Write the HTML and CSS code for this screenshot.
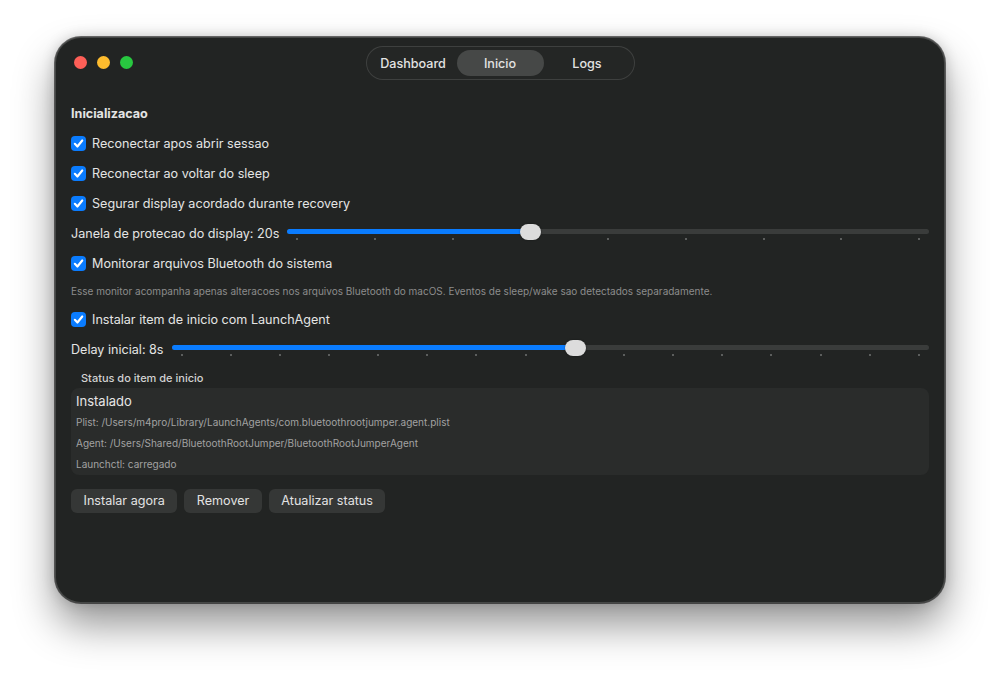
FILE: index.html
```html
<!DOCTYPE html>
<html>
<head>
    <title>BluetoothRootJumper - Inicio</title>
    <link rel="stylesheet" href="styles.css">
</head>
<body>
    <div class="window">
        <div class="titlebar">
            <div class="lights">
                <span class="light light--red"></span>
                <span class="light light--yellow"></span>
                <span class="light light--green"></span>
            </div>
            <div class="segmented">
                <span class="segmented__item">Dashboard</span>
                <span class="segmented__item segmented__item--active">Inicio</span>
                <span class="segmented__item">Logs</span>
            </div>
            <div></div>
        </div><!-- end titlebar -->

        <div class="content">
            <div class="row heading">Inicializacao</div>

            <label class="row check">
                <span class="check__box"><svg viewBox="0 0 14 14"><path d="M3.6 7.3 L6 9.8 L10.5 4.2" /></svg></span>
                Reconectar apos abrir sessao
            </label>
            <label class="row check">
                <span class="check__box"><svg viewBox="0 0 14 14"><path d="M3.6 7.3 L6 9.8 L10.5 4.2" /></svg></span>
                Reconectar ao voltar do sleep
            </label>
            <label class="row check">
                <span class="check__box"><svg viewBox="0 0 14 14"><path d="M3.6 7.3 L6 9.8 L10.5 4.2" /></svg></span>
                Segurar display acordado durante recovery
            </label>

            <div class="row slider">
                <span class="slider__label">Janela de protecao do display: 20s</span>
                <div class="slider__track">
                    <div class="slider__bar">
                        <div class="slider__fill" style="width: calc(10px + (100% - 20px) * 0.375)"></div>
                        <div class="slider__knob" style="left: calc(10px + (100% - 20px) * 0.375)"></div>
                    </div>
                    <div class="slider__ticks">
                        <i></i><i></i><i></i><i></i><i></i><i></i><i></i><i></i><i></i>
                    </div>
                </div>
            </div>

            <label class="row check">
                <span class="check__box"><svg viewBox="0 0 14 14"><path d="M3.6 7.3 L6 9.8 L10.5 4.2" /></svg></span>
                Monitorar arquivos Bluetooth do sistema
            </label>
            <div class="row caption">Esse monitor acompanha apenas alteracoes nos arquivos Bluetooth do macOS. Eventos de sleep/wake sao detectados separadamente.</div>

            <label class="row check">
                <span class="check__box"><svg viewBox="0 0 14 14"><path d="M3.6 7.3 L6 9.8 L10.5 4.2" /></svg></span>
                Instalar item de inicio com LaunchAgent
            </label>

            <div class="row slider">
                <span class="slider__label">Delay inicial: 8s</span>
                <div class="slider__track">
                    <div class="slider__bar">
                        <div class="slider__fill" style="width: calc(10px + (100% - 20px) * 0.5333)"></div>
                        <div class="slider__knob" style="left: calc(10px + (100% - 20px) * 0.5333)"></div>
                    </div>
                    <div class="slider__ticks">
                        <i></i><i></i><i></i><i></i><i></i><i></i><i></i><i></i>
                        <i></i><i></i><i></i><i></i><i></i><i></i><i></i><i></i>
                    </div>
                </div>
            </div>

            <div class="status__label">Status do item de inicio</div>
            <div class="status">
                <div class="status__title">Instalado</div>
                <div class="status__line">Plist: /Users/m4pro/Library/LaunchAgents/com.bluetoothrootjumper.agent.plist</div>
                <div class="status__line">Agent: /Users/Shared/BluetoothRootJumper/BluetoothRootJumperAgent</div>
                <div class="status__line">Launchctl: carregado</div>
            </div>

            <div class="buttons">
                <a href="#" class="btn">Instalar agora</a>
                <a href="#" class="btn">Remover</a>
                <a href="#" class="btn">Atualizar status</a>
            </div>
        </div><!-- end content -->
    </div><!-- end window -->
</body>
</html>
```

FILE: styles.css
```css
html, body {
    margin: 0;
    background: #fff;
    font-family: Inter, 'Noto Sans', sans-serif;
}

body {
    padding: 37px 0 0 55px;
    min-height: 100vh;
    box-sizing: border-box;
}

.window {
    width: 890px;
    height: 566px;
    box-sizing: border-box;
    background: #222423;
    border-radius: 26px;
    box-shadow: inset 0 0 0 1px rgba(255,255,255,0.16),
                0 0 0 1px rgba(0,0,0,0.55),
                0 22px 40px rgba(0,0,0,0.42),
                0 0 14px rgba(0,0,0,0.18);
    color: #e6e6e6;
}

.titlebar {
    display: grid;
    grid-template-columns: 1fr auto 1fr;
    align-items: start;
    height: 52px;
    padding-top: 9px;
    box-sizing: border-box;
}

.lights {
    display: flex;
    gap: 10px;
    padding: 10px 0 0 19px;
}

.light {
    width: 13px;
    height: 13px;
    border-radius: 50%;
}

.light--red { background: #fe5f57; }
.light--yellow { background: #febc2e; }
.light--green { background: #28c840; }

.segmented {
    display: flex;
    padding: 3px;
    width: 269px;
    height: 34px;
    box-sizing: border-box;
    border-radius: 17px;
    border: 1px solid rgba(255,255,255,0.12);
    background: #242625;
}

.segmented__item {
    flex: 1;
    display: flex;
    align-items: center;
    justify-content: center;
    font-size: 12.6px;
    font-weight: 500;
    color: #e2e2e2;
    border-radius: 13px;
}

.segmented__item--active {
    background: #464847;
}

.content {
    display: flex;
    flex-direction: column;
    padding: 9px 16px 0;
}

.row {
    display: flex;
    align-items: center;
    height: 30px;
    font-size: 12.6px;
    color: #e4e4e4;
}

.heading {
    font-weight: 700;
}

.check {
    gap: 6px;
}

.check__box {
    width: 15px;
    height: 15px;
    border-radius: 4px;
    background: #0a7cff;
    display: flex;
}

.check__box svg {
    width: 15px;
    height: 15px;
    fill: none;
    stroke: #fff;
    stroke-width: 2;
    stroke-linecap: round;
    stroke-linejoin: round;
}

.slider {
    gap: 8px;
}

.slider__label {
    white-space: nowrap;
}

.slider__track {
    flex: 1;
    margin-top: 3px;
}

.slider__bar {
    position: relative;
    height: 5px;
    border-radius: 3px;
    background: #3a3c3b;
}

.slider__fill {
    height: 5px;
    border-radius: 3px;
    background: #0a7cff;
}

/* knob lies over the bar */
.slider__knob {
    position: absolute;
    top: -5px;
    width: 21px;
    height: 16px;
    margin-left: -10px;
    border-radius: 8px;
    background: #dcdcdc;
    box-shadow: 0 0 2px rgba(0,0,0,0.4);
}

.slider__ticks {
    display: flex;
    justify-content: space-between;
    padding: 0 9px;
    margin-top: 4px;
}

.slider__ticks i {
    width: 2px;
    height: 2px;
    background: #5c5e5d;
}

.caption {
    height: 26px;
    font-size: 10px;
    color: #8c8c8c;
}

.status__label {
    margin: 4px 0 0 10px;
    height: 20px;
    line-height: 20px;
    font-size: 11px;
    font-weight: 500;
    color: #d2d2d2;
}

.status {
    height: 87px;
    box-sizing: border-box;
    padding: 3px 5px;
    border-radius: 8px;
    background: #2a2c2b;
}

.status__title {
    font-size: 13px;
    color: #e6e6e6;
    height: 21px;
    line-height: 21px;
}

.status__line {
    font-size: 10px;
    color: #a2a2a2;
    height: 21px;
    line-height: 21px;
}

.buttons {
    display: flex;
    gap: 7px;
    margin-top: 14px;
}

.btn {
    display: inline-block;
    height: 24px;
    line-height: 24px;
    padding: 0 12.5px;
    border-radius: 6px;
    background: #353736;
    color: #e2e2e2;
    font-size: 12.6px;
    text-decoration: none;
}
```
